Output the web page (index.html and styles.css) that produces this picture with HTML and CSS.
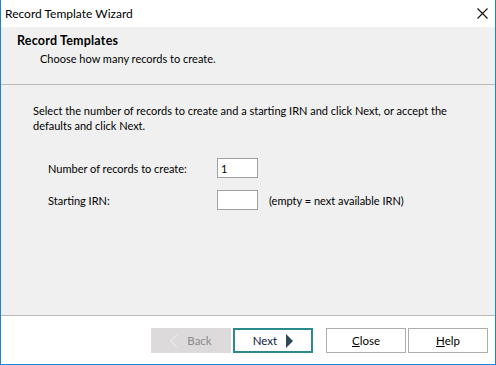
FILE: index.html
```html
<!DOCTYPE html>
<html>
<head>
  <meta charset="utf-8">
  <title>Record Template Wizard</title>
  <link rel="stylesheet" href="styles.css">
</head>
<body>
  <div class="window">
    <div class="titlebar">
      <span class="title">Record Template Wizard</span>
      <svg class="close-x" width="11" height="11" viewBox="0 0 11 11">
        <path d="M0.5 0.5 L10.5 10.5 M10.5 0.5 L0.5 10.5" stroke="#111" stroke-width="1.1" fill="none"/>
      </svg>
    </div>

    <div class="wizard-header">
      <h3>Record Templates</h3>
      <p>Choose how many records to create.</p>
    </div>

    <div class="wizard-body">
      <p class="intro">Select the number of records to create and a starting IRN and click Next, or accept the defaults and click Next.</p>
      <div class="form">
        <div class="row">
          <label>Number of records to create:</label>
          <input class="field" type="text" value="1">
        </div>
        <div class="row">
          <label>Starting IRN:</label>
          <input class="field" type="text" value="">
          <span class="hint">(empty = next available IRN)</span>
        </div>
      </div>
    </div>

    <div class="wizard-footer">
      <div class="btn-pair">
        <button class="btn btn-disabled">
          <svg width="8" height="14" viewBox="0 0 8 14"><path d="M7 0.5 L0.8 7 L7 13.5" stroke="#f4f4f4" stroke-width="1" fill="none"/></svg>
          <span>Back</span>
        </button>
        <button class="btn btn-default">
          <span>Next</span>
          <svg width="7" height="14" viewBox="0 0 7 14"><path d="M0 0 L7 7 L0 14 Z" fill="#2f4858"/></svg>
        </button>
      </div>
      <div class="btn-pair">
        <button class="btn"><span><u>C</u>lose</span></button>
        <button class="btn"><span><u>H</u>elp</span></button>
      </div>
    </div>
  </div>
</body>
</html>
```

FILE: styles.css
```css
body {
  margin: 0;
  font-family: Lato, "Noto Sans", sans-serif;
  font-size: 11px;
  color: #000;
}

.window {
  width: 496px;
  height: 365px;
  box-sizing: border-box;
  border: 1px solid #1883d7;
  border-top: none;
  display: flex;
  flex-direction: column;
  background: #fff;
}

.titlebar {
  height: 27px;
  display: flex;
  align-items: center;
  justify-content: space-between;
  padding: 0 6px 0 4px;
  background: #fff;
}

.title {
  font-size: 12px;
}

.close-x {
  margin-right: 1px;
}

/* cabecera gris del asistente */
.wizard-header {
  height: 58px;
  background: #f0f0f0;
  border-bottom: 1px solid #b9b9b9;
  padding: 6px 0 0 16px;
  box-sizing: border-box;
}

.wizard-header h3 {
  margin: 0;
  font-size: 12.5px;
  font-weight: bold;
  letter-spacing: 0.2px;
  line-height: 15px;
}

.wizard-header p {
  margin: 3px 0 0 23px;
  line-height: 15px;
}

.wizard-body {
  flex: 1;
  background: #f0f0f0;
  border-bottom: 1px solid #b9b9b9;
  padding: 18px 40px 0 32px;
}

.intro {
  margin: 0;
  line-height: 15px;
}

.form {
  margin: 25px 0 0 15px;
  display: flex;
  flex-direction: column;
  gap: 12px;
}

.row {
  display: flex;
  align-items: center;
}

.row label {
  width: 169px;
}

.field {
  width: 41px;
  height: 20px;
  box-sizing: border-box;
  border: 1px solid #a0a0a0;
  background: #fff;
  font-family: inherit;
  font-size: 11px;
  padding: 0 3px;
  margin: 0;
}

.hint {
  margin-left: 11px;
}

.wizard-footer {
  height: 48px;
  display: flex;
  justify-content: flex-end;
  align-items: flex-start;
  gap: 13px;
  padding: 12px 7px 0 0;
  box-sizing: border-box;
}

.btn-pair {
  display: flex;
  gap: 2px;
}

.btn {
  width: 80px;
  height: 25px;
  box-sizing: border-box;
  border: 1px solid #adadad;
  background: #fff;
  font-family: inherit;
  font-size: 11.5px;
  color: #000;
  display: flex;
  align-items: center;
  justify-content: center;
  gap: 9px;
  padding: 0;
}

.btn-disabled {
  background: #dcdada;
  border-color: #dcdada;
  color: #8a8a8a;
}

.btn-default {
  border: 2px solid #2b8a8a;
  color: #0b1a3d;
}
```
